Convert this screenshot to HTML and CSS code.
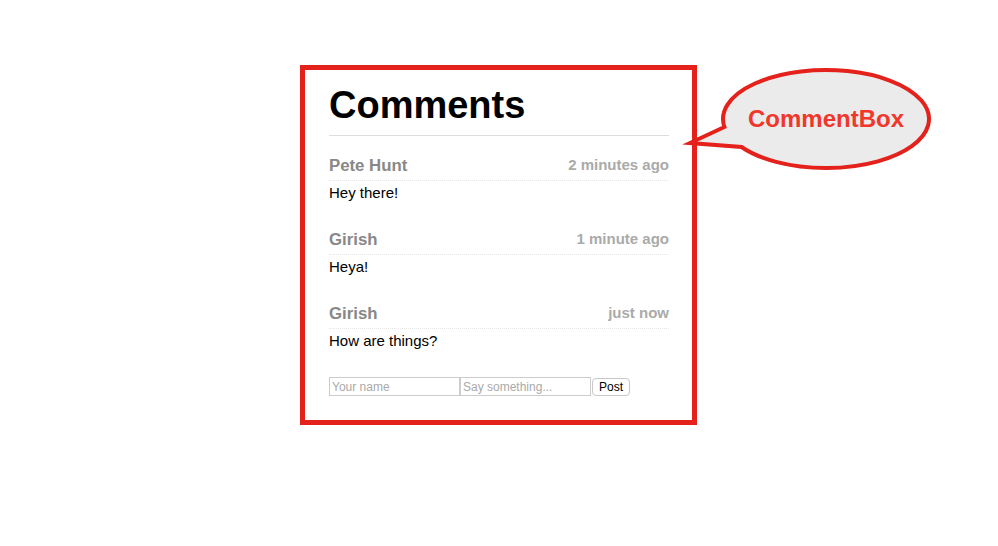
FILE: index.html
```html
<!DOCTYPE html>
<html lang="en">
<head>
    <meta charset="UTF-8">
    <title>CommentBox</title>
    <link rel="stylesheet" href="styles.css">
</head>
<body>

    <div class="comment-box">
        <h1>Comments</h1>

        <!-- Lista de comentarios -->
        <div class="comment-list">
            <div class="comment">
                <div class="comment-head">
                    <span class="author">Pete Hunt</span>
                    <span class="time">2 minutes ago</span>
                </div>
                <p class="text">Hey there!</p>
            </div>
            <div class="comment">
                <div class="comment-head">
                    <span class="author">Girish</span>
                    <span class="time">1 minute ago</span>
                </div>
                <p class="text">Heya!</p>
            </div>
            <div class="comment">
                <div class="comment-head">
                    <span class="author">Girish</span>
                    <span class="time">just now</span>
                </div>
                <p class="text">How are things?</p>
            </div>
        </div>

        <form class="comment-form">
            <input type="text" placeholder="Your name">
            <input type="text" placeholder="Say something...">
            <button type="submit">Post</button>
        </form>
    </div>

    <!-- Globo con el nombre del componente -->
    <svg class="bubble" width="260" height="120" viewBox="0 0 260 120">
        <path d="M 44.4 67 L 10 83 L 61.5 87 A 103 49 0 1 0 44.4 67 Z"
              fill="#ebebeb" stroke="#e4221b" stroke-width="4" stroke-linejoin="miter"/>
        <text x="146" y="67" text-anchor="middle" class="bubble-label">CommentBox</text>
    </svg>

</body>
</html>
```

FILE: styles.css
```css
body {
    font-family: "Liberation Sans", Arial, sans-serif;
    margin: 0;
    padding: 0;
    position: relative;
}
.comment-box {
    width: 397px;
    box-sizing: border-box;
    margin: 65px 0 0 300px;
    padding: 13px 23px 24px 24px;
    border: 5px solid #e4221b;
    background-color: #fff;
}
.comment-box h1 {
    margin: 0;
    font-size: 38px;
    line-height: 44px;
    font-weight: bold;
    color: #000;
    padding-bottom: 8px;
    border-bottom: 1px solid #ddd;
}

/* Comentarios */
.comment-list {
    display: flex;
    flex-direction: column;
    gap: 26px;
    margin-top: 20px;
}
.comment-head {
    display: flex;
    justify-content: space-between;
    align-items: flex-start;
    line-height: 20px;
    padding-bottom: 4px;
    border-bottom: 1px dotted #e6e6e6;
}
.author {
    font-size: 16.8px;
    font-weight: bold;
    color: #888;
}
.time {
    font-size: 15px;
    line-height: 18px;
    font-weight: bold;
    color: #aaa;
}
.text {
    margin: 2px 0 1px;
    font-size: 15px;
    line-height: 20px;
    color: #000;
}

/* Formulario */
.comment-form {
    display: flex;
    margin-top: 25px;
}
.comment-form input[type="text"] {
    width: 131px;
    height: 19px;
    box-sizing: border-box;
    margin: 0;
    padding: 0 2px;
    border: 1px solid #ccc;
    font-family: "Liberation Sans", Arial, sans-serif;
    font-size: 12px;
    color: #000;
}
.comment-form input::placeholder {
    color: #aaa;
}
.comment-form button {
    width: 38px;
    height: 18px;
    margin: 1px 0 0 1px;
    padding: 0;
    border: 1px solid #c8c8c8;
    border-radius: 4px;
    background-color: #fff;
    font-family: "Liberation Sans", Arial, sans-serif;
    font-size: 12px;
    color: #000;
}

.bubble {
    position: absolute;
    left: 680px;
    top: 60px;
}
.bubble-label {
    font-family: "Liberation Sans", Arial, sans-serif;
    font-size: 24px;
    font-weight: bold;
    fill: #f0372a;
}
```
